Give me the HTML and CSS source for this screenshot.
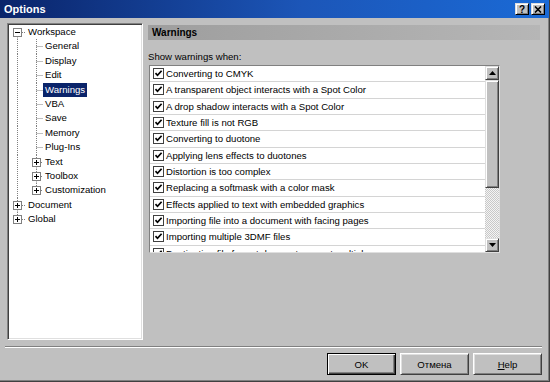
FILE: index.html
```html
<!DOCTYPE html>
<html>
<head>
<meta charset="utf-8">
<title>Options</title>
<link rel="stylesheet" href="styles.css">
</head>
<body>
<div class="win">
	<div class="title">
		<span class="caption-text">Options</span>
		<span class="tbtn">?</span>
		<span class="tbtn"><svg width="8" height="7" viewBox="0 0 8 7"><path d="M1 0.5l6 6M7 0.5l-6 6" stroke="#000" stroke-width="1.6"/></svg></span>
	</div>

	<div class="main">
		<div class="tree">
			<div class="node">
				<svg class="g1"><path class="dot" d="M8.5 11.5V15M13 7.5H17"/><rect x="4.5" y="3.5" width="8" height="8"/><path class="sign" d="M6 7.5h5"/></svg>
				<span class="label">Workspace</span>
			</div>
			<div class="node">
				<svg class="g2"><path class="dot" d="M8.5 0V15M27.5 0V15M27.5 7.5H34"/></svg>
				<span class="label">General</span>
			</div>
			<div class="node">
				<svg class="g2"><path class="dot" d="M8.5 0V15M27.5 0V15M27.5 7.5H34"/></svg>
				<span class="label">Display</span>
			</div>
			<div class="node">
				<svg class="g2"><path class="dot" d="M8.5 0V15M27.5 0V15M27.5 7.5H34"/></svg>
				<span class="label">Edit</span>
			</div>
			<div class="node">
				<svg class="g2"><path class="dot" d="M8.5 0V15M27.5 0V15M27.5 7.5H34"/></svg>
				<span class="label selected">Warnings</span>
			</div>
			<div class="node">
				<svg class="g2"><path class="dot" d="M8.5 0V15M27.5 0V15M27.5 7.5H34"/></svg>
				<span class="label">VBA</span>
			</div>
			<div class="node">
				<svg class="g2"><path class="dot" d="M8.5 0V15M27.5 0V15M27.5 7.5H34"/></svg>
				<span class="label">Save</span>
			</div>
			<div class="node">
				<svg class="g2"><path class="dot" d="M8.5 0V15M27.5 0V15M27.5 7.5H34"/></svg>
				<span class="label">Memory</span>
			</div>
			<div class="node">
				<svg class="g2"><path class="dot" d="M8.5 0V15M27.5 0V15M27.5 7.5H34"/></svg>
				<span class="label">Plug-Ins</span>
			</div>
			<div class="node">
				<svg class="g2"><path class="dot" d="M8.5 0V15M27.5 0V3.5M27.5 11.5V15M32 7.5H34"/><rect x="23.5" y="3.5" width="8" height="8"/><path class="sign" d="M25 7.5h5M27.5 5v5"/></svg>
				<span class="label">Text</span>
			</div>
			<div class="node">
				<svg class="g2"><path class="dot" d="M8.5 0V15M27.5 0V3.5M27.5 11.5V15M32 7.5H34"/><rect x="23.5" y="3.5" width="8" height="8"/><path class="sign" d="M25 7.5h5M27.5 5v5"/></svg>
				<span class="label">Toolbox</span>
			</div>
			<div class="node">
				<svg class="g2"><path class="dot" d="M8.5 0V15M27.5 0V3.5M32 7.5H34"/><rect x="23.5" y="3.5" width="8" height="8"/><path class="sign" d="M25 7.5h5M27.5 5v5"/></svg>
				<span class="label">Customization</span>
			</div>
			<div class="node">
				<svg class="g1"><path class="dot" d="M8.5 0V3.5M8.5 11.5V15M13 7.5H17"/><rect x="4.5" y="3.5" width="8" height="8"/><path class="sign" d="M6 7.5h5M8.5 5v5"/></svg>
				<span class="label">Document</span>
			</div>
			<div class="node">
				<svg class="g1"><path class="dot" d="M8.5 0V3.5M13 7.5H17"/><rect x="4.5" y="3.5" width="8" height="8"/><path class="sign" d="M6 7.5h5M8.5 5v5"/></svg>
				<span class="label">Global</span>
			</div>
		</div>

		<div class="page">
			<div class="head">Warnings</div>
			<div class="caption">Show warnings when:</div>
			<div class="list">
				<div class="rows">
					<div class="row"><i class="check"></i>Converting to CMYK</div>
					<div class="row"><i class="check"></i>A transparent object interacts with a Spot Color</div>
					<div class="row"><i class="check"></i>A drop shadow interacts with a Spot Color</div>
					<div class="row"><i class="check"></i>Texture fill is not RGB</div>
					<div class="row"><i class="check"></i>Converting to duotone</div>
					<div class="row"><i class="check"></i>Applying lens effects to duotones</div>
					<div class="row"><i class="check"></i>Distortion is too complex</div>
					<div class="row"><i class="check"></i>Replacing a softmask with a color mask</div>
					<div class="row"><i class="check"></i>Effects applied to text with embedded graphics</div>
					<div class="row"><i class="check"></i>Importing file into a document with facing pages</div>
					<div class="row"><i class="check"></i>Importing multiple 3DMF files</div>
					<div class="row"><i class="check"></i>Destination file format does not support multiple pages</div>
				</div>
				<div class="scroll">
					<span class="arrow"><svg width="7" height="4" viewBox="0 0 7 4"><path d="M3.5 0L7 4H0z"/></svg></span>
					<span class="thumb"></span>
					<span class="track"></span>
					<span class="arrow"><svg width="7" height="4" viewBox="0 0 7 4"><path d="M0 0H7L3.5 4z"/></svg></span>
				</div>
			</div>
		</div>
	</div>

	<div class="sep"></div>

	<div class="buttons">
		<span class="btn def">OK</span>
		<span class="btn">Отмена</span>
		<span class="btn"><u>H</u>elp</span>
	</div>
</div>
</body>
</html>
```

FILE: styles.css
```css
*{ margin:0; padding:0;}
body{ width:550px; height:382px; overflow:hidden; background:#c0c0c0; font:9.6px "Liberation Sans", Arial, sans-serif; color:#000;}
.win{ width:550px; height:382px; box-sizing:border-box; display:flex; flex-direction:column; background:#c0c0c0; border-right:1px solid #404040; border-bottom:1px solid #404040; box-shadow:inset -1px -1px #808080;}

.title{ height:18px; flex:none; display:flex; align-items:center; gap:2px; padding:0 4px 0 4px; background:linear-gradient(90deg, #0a246a, #1c56b8 55%, #1a6ad6); color:#fff; font:bold 11px "Liberation Sans", Arial, sans-serif;}
.caption-text{ flex:1;}
.tbtn{ width:14px; height:12px; box-sizing:border-box; display:flex; align-items:center; justify-content:center; background:#c0c0c0; color:#000; font:bold 10px "Liberation Sans", Arial, sans-serif; border:1px solid; border-color:#dfdfdf #000 #000 #dfdfdf; box-shadow:inset 1px 1px #fff, inset -1px -1px #808080;}

.main{ height:317px; flex:none; display:flex; gap:5px; margin:5px 6px 0 7px;}

.tree{ width:136px; flex:none; box-sizing:border-box; padding:1px; background:#fff; border:1px solid; border-color:#808080 #fff #fff #808080; box-shadow:inset 1px 1px #404040, inset -1px -1px #dfdfdf;}
.node{ height:14.4px; display:flex; align-items:center; white-space:nowrap;}
.node svg{ height:14.4px; flex:none;}
.g1{ width:17px;}
.g2{ width:34px;}
.node .dot{ fill:none; stroke:#808080; stroke-dasharray:1 1;}
.node rect{ fill:#fff; stroke:#808080;}
.node .sign{ fill:none; stroke:#000;}
.label{ height:14.4px; line-height:14.4px; padding:0 2px; box-sizing:border-box;}
.selected{ background:#0a246a; color:#fff;}

.page{ flex:1; display:flex; flex-direction:column;}
.head{ height:15px; line-height:15px; margin:2px 3px 0 0; padding-left:4px; background:linear-gradient(90deg, #9e9e9e, #b6b6b6); font-weight:bold; font-size:10px;}
.caption{ margin-top:11px; line-height:12px;}

.list{ width:351px; height:188px; box-sizing:border-box; margin:2px 0 0 1px; display:flex; background:#fff; border:1px solid; border-color:#808080 #dfdfdf #dfdfdf #808080;}
.rows{ flex:1; overflow:hidden;}
.row{ height:16.33px; box-sizing:border-box; display:flex; align-items:center; gap:2px; padding-left:3px; border-bottom:1px solid #d4d4d4; white-space:nowrap;}
.check{ width:11px; height:11px; flex:none; box-sizing:border-box; border:1px solid #404040; background:#fff url("data:image/svg+xml;utf8,<svg xmlns='http://www.w3.org/2000/svg' width='9' height='9' viewBox='0 0 9 9'><path d='M1.5 4.2L3.5 6.3L7.6 1.8' fill='none' stroke='black' stroke-width='1.7'/></svg>") center no-repeat;}

.scroll{ width:14px; flex:none; display:flex; flex-direction:column;}
.arrow, .thumb{ box-sizing:border-box; background:#c0c0c0; border:1px solid; border-color:#dfdfdf #404040 #404040 #dfdfdf; box-shadow:inset 1px 1px #fff, inset -1px -1px #808080;}
.arrow{ height:14px; display:flex; align-items:center; justify-content:center;}
.thumb{ height:108px;}
.track{ flex:1; background:repeating-conic-gradient(#c8c8c8 0 25%, #f4f4f4 0 50%) 0 0/2px 2px;}

.sep{ margin:6px 7px 0 5px; border-top:1px solid #808080; border-bottom:1px solid #fff;}

.buttons{ display:flex; justify-content:flex-end; gap:4px; margin:5px 7px 0 0;}
.btn{ width:69px; height:22px; box-sizing:border-box; display:flex; align-items:center; justify-content:center; background:#c0c0c0; border:1px solid; border-color:#fff #404040 #404040 #fff; box-shadow:inset 1px 1px #dfdfdf, inset -1px -1px #808080;}
.btn.def{ border-color:#000; box-shadow:inset 1px 1px #fff, inset -1px -1px #404040, inset -2px -2px #808080;}
```
